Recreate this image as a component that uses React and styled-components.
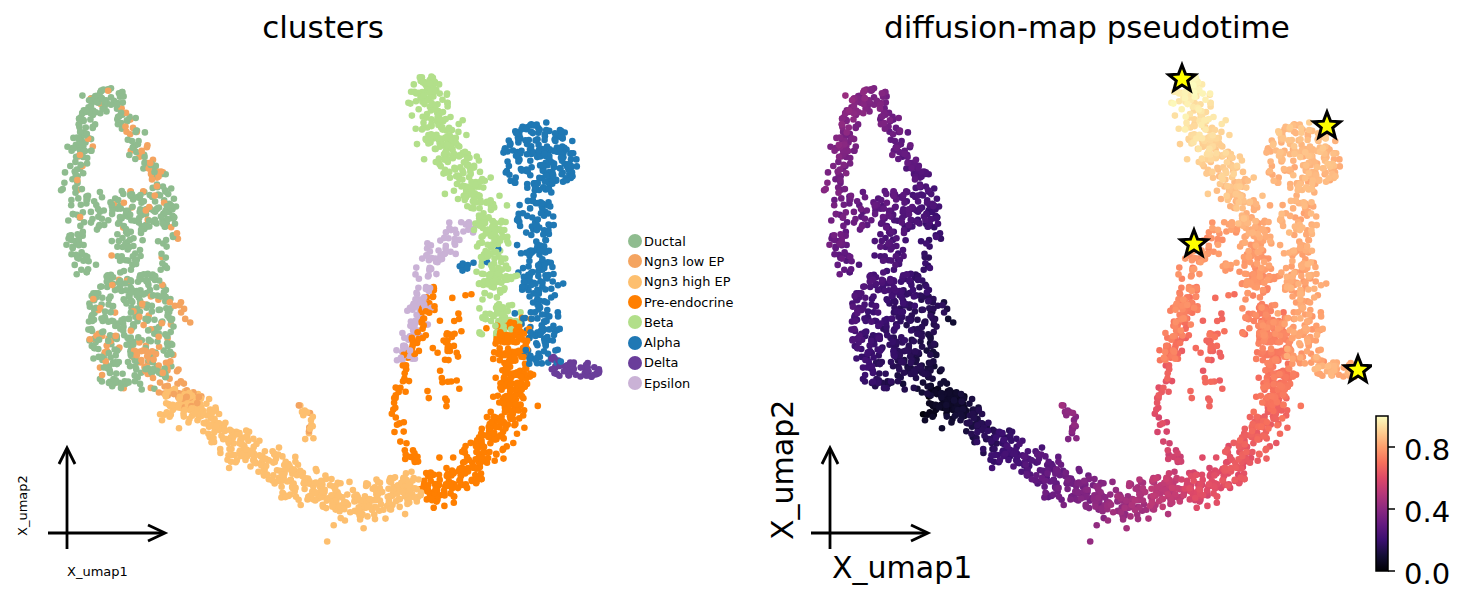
import React, { useMemo } from "react";
import styled, { createGlobalStyle } from "styled-components";

const GlobalStyle = createGlobalStyle`
  html, body { margin: 0; padding: 0; background: #fff; }
  body { font-family: "DejaVu Sans", sans-serif; overflow: hidden; }
`;

const CLUSTERS = [
  { name: "Ductal", color: "#8fbc8f" },
  { name: "Ngn3 low EP", color: "#f4a460" },
  { name: "Ngn3 high EP", color: "#fdbf6f" },
  { name: "Pre-endocrine", color: "#ff7f00" },
  { name: "Beta", color: "#b2df8a" },
  { name: "Alpha", color: "#1f78b4" },
  { name: "Delta", color: "#6a3d9a" },
  { name: "Epsilon", color: "#cab2d6" },
];

const MAGMA = [
  [0, 0, 4], [20, 14, 54], [59, 15, 112], [100, 26, 128], [140, 41, 129], [183, 55, 121],
  [222, 73, 104], [247, 112, 92], [254, 159, 109], [254, 207, 146], [252, 253, 191],
];

const magma = (v) => {
  const t = Math.min(1, Math.max(0, v)) * 10;
  const i = Math.min(9, Math.floor(t));
  const f = t - i;
  const a = MAGMA[i], b = MAGMA[i + 1];
  return `rgb(${a.map((c, k) => Math.round(c + (b[k] - c) * f)).join(",")})`;
};

// ductal area gets its pseudotime from position
const tDuct = (x, y) => 0.42 - (y - 90) * 0.0007 - (x - 70) * 0.0012;

const SHAPES = [
  // Ductal
  { k: "blob", c: 0, cx: 111, cy: 100, rx: 16, ry: 12, n: 30, t: tDuct, mix: 0.05 },
  { k: "band", c: 0, pts: [[100, 95], [86, 118], [78, 150], [72, 192]], w: 28, n: 95, t: tDuct, mix: 0.08 },
  { k: "band", c: 0, pts: [[118, 100], [128, 125], [138, 150], [150, 172], [165, 190]], w: 24, n: 65, t: tDuct, mix: 0.3 },
  { k: "band", c: 0, pts: [[168, 185], [172, 240]], w: 14, n: 25, t: tDuct, mix: 0.15 },
  { k: "blob", c: 0, cx: 120, cy: 212, rx: 53, ry: 22, p: 3, n: 130, t: tDuct, mix: 0.06 },
  { k: "band", c: 0, pts: [[72, 232], [86, 275]], w: 26, n: 34, t: tDuct, mix: 0.06 },
  { k: "band", c: 0, pts: [[125, 232], [130, 272]], w: 36, n: 34, t: tDuct, mix: 0.05 },
  { k: "band", c: 0, pts: [[160, 240], [165, 272]], w: 16, n: 10, t: tDuct, mix: 0.2 },
  { k: "blob", c: 0, cx: 131, cy: 332, rx: 43, ry: 60, p: 3.2, n: 340, t: tDuct, mix: 0.13 },
  // Ngn3 low EP
  { k: "band", c: 1, pts: [[138, 345], [160, 372], [185, 395], [200, 405]], w: 34, n: 70, t: tDuct },
  { k: "band", c: 1, pts: [[140, 150], [160, 175]], w: 16, n: 12, t: tDuct },
  { k: "band", c: 1, pts: [[170, 300], [190, 325]], w: 20, n: 8, t: tDuct },
  // Ngn3 high EP
  { k: "band", c: 2, pts: [[168, 392], [210, 420], [250, 455], [290, 478], [330, 497], [355, 508], [390, 497], [420, 484]], w: 44, n: 460, t: [0.03, 0.55] },
  { k: "band", c: 2, pts: [[168, 392], [210, 420], [250, 455], [290, 478], [330, 495], [355, 505], [390, 495], [420, 482]], w: 75, n: 40, t: [0.03, 0.55] },
  { k: "band", c: 2, pts: [[298, 404], [308, 415], [312, 428], [308, 440]], w: 12, n: 18, t: [0.42, 0.38], mix: 0.2 },
  // Pre-endocrine
  { k: "band", c: 3, pts: [[425, 497], [465, 472], [497, 442], [512, 405], [515, 360], [508, 322]], w: 46, n: 400, t: [0.58, 0.76] },
  { k: "band", c: 3, pts: [[438, 288], [420, 325], [407, 365], [397, 405], [398, 440], [418, 462]], w: 18, n: 75, t: [0.74, 0.56] },
  { k: "band", c: 3, pts: [[462, 290], [455, 330], [448, 370], [440, 410]], w: 38, n: 40, t: [0.72, 0.64] },
  // Beta
  { k: "band", c: 4, pts: [[423, 78], [428, 100], [444, 140], [468, 178], [488, 220]], w: 52, n: 270, t: [0.98, 0.84] },
  { k: "band", c: 4, pts: [[488, 220], [492, 255], [496, 290], [500, 335]], w: 42, n: 170, t: [0.83, 0.72] },
  // Alpha
  { k: "blob", c: 5, cx: 540, cy: 158, rx: 38, ry: 36, n: 190, t: [0.87, 0.84] },
  { k: "band", c: 5, pts: [[535, 195], [537, 245], [540, 295], [539, 335], [540, 365]], w: 46, n: 210, t: [0.84, 0.8] },
  { k: "band", c: 5, pts: [[460, 268], [500, 250]], w: 16, n: 10, t: [0.8, 0.8] },
  // Delta
  { k: "blob", c: 6, cx: 576, cy: 371, rx: 25, ry: 9, n: 45, t: [0.84, 0.84] },
  { k: "band", c: 6, pts: [[550, 357], [562, 364]], w: 8, n: 5, t: [0.83, 0.83] },
  // Epsilon
  { k: "band", c: 7, pts: [[465, 218], [448, 242], [428, 272], [418, 305], [410, 335], [405, 362]], w: 32, n: 120, t: [0.8, 0.72] },
];

const mulberry = (seed) => () => {
  seed = (seed + 0x6d2b79f5) | 0;
  let t = Math.imul(seed ^ (seed >>> 15), 1 | seed);
  t = (t + Math.imul(t ^ (t >>> 7), 61 | t)) ^ t;
  return ((t ^ (t >>> 14)) >>> 0) / 4294967296;
};

const makeCells = () => {
  const rand = mulberry(20240611);
  const cells = [];
  const push = (s, x, y, frac) => {
    const base = typeof s.t === "function" ? s.t(x, y) : s.t[0] + (s.t[1] - s.t[0]) * frac;
    const c = s.mix && rand() < s.mix ? 1 : s.c;
    cells.push({ x, y, c, t: Math.max(0.005, Math.min(1, base + (rand() - 0.5) * 0.06)) });
  };
  SHAPES.forEach((s) => {
    if (s.k === "blob") {
      const p = s.p || 2;
      for (let i = 0; i < s.n; i++) {
        let u, v;
        do {
          u = rand() * 2 - 1;
          v = rand() * 2 - 1;
        } while (Math.abs(u) ** p + Math.abs(v) ** p > 1);
        push(s, s.cx + u * s.rx, s.cy + v * s.ry, (v + 1) / 2);
      }
      return;
    }
    const segs = [];
    let L = 0;
    for (let i = 0; i < s.pts.length - 1; i++) {
      const [ax, ay] = s.pts[i], [bx, by] = s.pts[i + 1];
      const len = Math.hypot(bx - ax, by - ay);
      segs.push({ ax, ay, bx, by, len, start: L });
      L += len;
    }
    for (let i = 0; i < s.n; i++) {
      const d = rand() * L;
      const g = segs.find((q) => d <= q.start + q.len) || segs[segs.length - 1];
      const f = (d - g.start) / g.len;
      const nx = -(g.by - g.ay) / g.len, ny = (g.bx - g.ax) / g.len;
      const off = ((rand() + rand() + rand() - 1.5) / 1.5) * s.w * 0.62;
      const along = (rand() - 0.5) * 4;
      push(s, g.ax + (g.bx - g.ax) * f + nx * off + ny * along, g.ay + (g.by - g.ay) * f + ny * off - nx * along, d / L);
    }
  });
  for (let i = cells.length - 1; i > 0; i--) {
    const j = Math.floor(rand() * (i + 1));
    [cells[i], cells[j]] = [cells[j], cells[i]];
  }
  return cells;
};

const starPath = (cx, cy, R = 14, r = 6) => {
  const p = [];
  for (let i = 0; i < 10; i++) {
    const a = -Math.PI / 2 + (i * Math.PI) / 5;
    const rad = i % 2 ? r : R;
    p.push(`${(cx + rad * Math.cos(a)).toFixed(2)},${(cy + rad * Math.sin(a)).toFixed(2)}`);
  }
  return `M${p.join("L")}Z`;
};

const ROOTS = [[419, 79], [564, 126], [431, 244], [595, 370]];

const Figure = styled.div`
  display: flex;
  width: 1469px;
  height: 605px;
  background: #fff;
  color: #000;
`;

const Panel = styled.div`
  display: flex;
  flex-direction: column;
  flex-shrink: 0;
  width: ${(p) => p.$w}px;
`;

const Title = styled.div`
  width: ${(p) => p.$w}px;
  height: 44px;
  padding-top: 5px;
  line-height: 44px;
  font-size: 31px;
  text-align: center;
  white-space: nowrap;
`;

const PlotRow = styled.div`
  display: flex;
  height: 556px;
`;

const Plot = styled.svg`
  display: block;
  flex-shrink: 0;
  width: ${(p) => p.$w}px;
  height: 556px;
  font-family: "DejaVu Sans", sans-serif;
`;

const Legend = styled.ul`
  list-style: none;
  margin: 0;
  padding: 182px 0 0 3px;
  display: flex;
  flex-direction: column;
`;

const LegendItem = styled.li`
  display: flex;
  align-items: center;
  gap: 2px;
  height: 20.3px;
  font-size: 12.9px;
  white-space: nowrap;
`;

const Swatch = styled.span`
  flex-shrink: 0;
  width: 14px;
  height: 14px;
  border-radius: 50%;
  background: ${(p) => p.$c};
`;

const Arrows = () => (
  <g stroke="#000" strokeWidth="2.8" fill="none" strokeLinecap="butt">
    <line x1={67} y1={549} x2={67} y2={449} />
    <polyline points="59,464 67,448 75,464" />
    <line x1={48} y1={533} x2={164} y2={533} />
    <polyline points="148,525 165,533 148,541" />
  </g>
);

const Dots = ({ cells, colorOf }) =>
  cells.map((p, i) => <circle key={i} cx={p.x.toFixed(1)} cy={p.y.toFixed(1)} r="3.3" fill={colorOf(p)} />);

const TICKS = [0.8, 0.4, 0.0];

const Colorbar = () => (
  <Plot $w={97} viewBox="1372 49 97 556">
    <defs>
      <linearGradient id="magma" x1="0" y1="1" x2="0" y2="0">
        {MAGMA.map((_, i) => (
          <stop key={i} offset={i / 10} stopColor={magma(i / 10)} />
        ))}
      </linearGradient>
    </defs>
    <rect x="1376" y="416" width="12" height="155" fill="url(#magma)" stroke="#000" strokeWidth="1.5" />
    {TICKS.map((v) => {
      const y = 571 - v * 155;
      return (
        <g key={v}>
          <line x1="1388" x2="1395" y1={y} y2={y} stroke="#000" strokeWidth="1.5" />
          <text x="1404" y={y + 13} fontSize="29">{v.toFixed(1)}</text>
        </g>
      );
    })}
  </Plot>
);

export default function App() {
  const cells = useMemo(makeCells, []);
  const byTime = useMemo(() => [...cells].sort((a, b) => a.t - b.t), [cells]);

  return (
    <>
      <GlobalStyle />
      <Figure>
        <Panel $w={760}>
          <Title $w={646}>clusters</Title>
          <PlotRow>
            <Plot $w={625} viewBox="0 49 625 556">
              <Dots cells={cells} colorOf={(p) => CLUSTERS[p.c].color} />
              <Arrows />
              <text x="67" y="576" fontSize="13">X_umap1</text>
              <text transform="translate(27 536) rotate(-90)" fontSize="13">X_umap2</text>
            </Plot>
            <Legend>
              {CLUSTERS.map((c) => (
                <LegendItem key={c.name}>
                  <Swatch $c={c.color} />
                  {c.name}
                </LegendItem>
              ))}
            </Legend>
          </PlotRow>
        </Panel>
        <Panel $w={709}>
          <Title $w={654}>diffusion-map pseudotime</Title>
          <PlotRow>
            <Plot $w={612} viewBox="-3 49 612 556">
              <Dots cells={byTime} colorOf={(p) => magma(p.t)} />
              {ROOTS.map(([x, y]) => (
                <path key={x} d={starPath(x, y)} fill="#ffff00" stroke="#000" strokeWidth="3" strokeLinejoin="miter" />
              ))}
              <Arrows />
              <text x="69" y="578" fontSize="30">X_umap1</text>
              <text transform="translate(30 540) rotate(-90)" fontSize="30">X_umap2</text>
            </Plot>
            <Colorbar />
          </PlotRow>
        </Panel>
      </Figure>
    </>
  );
}
